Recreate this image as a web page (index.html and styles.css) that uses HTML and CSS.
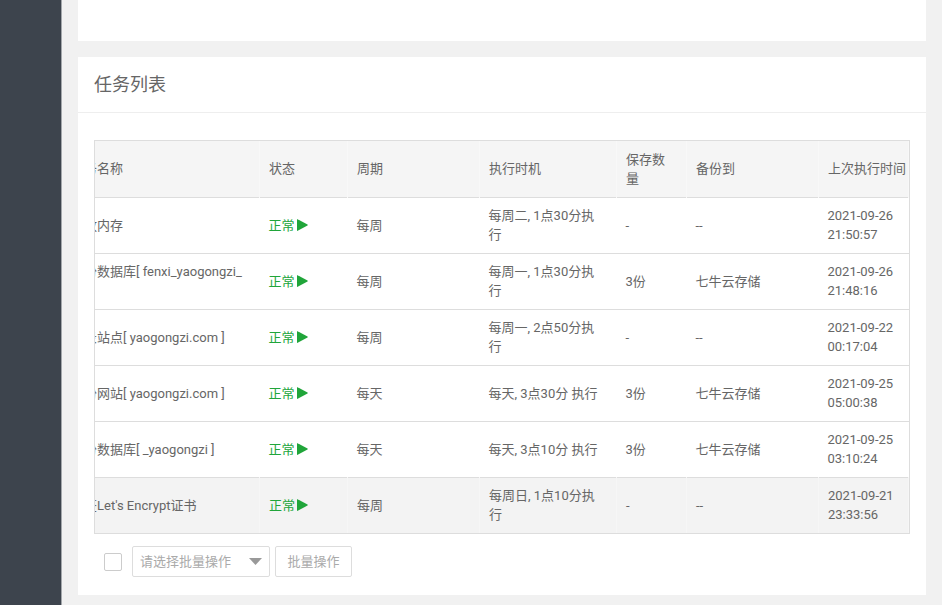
FILE: index.html
```html
<!DOCTYPE html>
<html lang="zh-CN">

<head>
    <meta charset="UTF-8">
    <meta name="viewport" content="width=device-width, initial-scale=1.0">
    <title>计划任务</title>
    <link rel="stylesheet" href="styles.css">
</head>

<body>
    <svg width="0" height="0" class="sprite" aria-hidden="true">
        <symbol id="play" viewBox="0 0 11 12">
            <path d="M0 0.6Q0 -0.1 0.7 0.2L10.5 5.5Q11 6 10.5 6.5L0.7 11.8Q0 12.1 0 11.4Z" fill="currentColor"/>
        </symbol>
    </svg>
    <div class="layout">
        <aside class="sidebar"></aside>
        <main class="main">
            <section class="card card-form"></section>

            <section class="card">
                <h1 class="card-title">任务列表</h1>
                <div class="card-body">
                    <div class="table-wrap">
                        <table class="task-table">
                            <colgroup>
                                <col>
                                <col class="col-status">
                                <col class="col-cycle">
                                <col class="col-time">
                                <col class="col-save">
                                <col class="col-target">
                                <col class="col-last">
                            </colgroup>
                            <thead>
                                <tr>
                                    <th>任务名称</th>
                                    <th>状态</th>
                                    <th>周期</th>
                                    <th>执行时机</th>
                                    <th>保存数量</th>
                                    <th>备份到</th>
                                    <th class="nowrap">上次执行时间</th>
                                </tr>
                            </thead>
                            <tbody>
                                <tr>
                                    <td>释放内存</td>
                                    <td><a class="status" href="#">正常<svg class="play"><use href="#play"/></svg></a></td>
                                    <td>每周</td>
                                    <td>每周二, 1点30分执行</td>
                                    <td>-</td>
                                    <td>--</td>
                                    <td>2021-09-26 21:50:57</td>
                                </tr>
                                <tr>
                                    <td>备份数据库[ fenxi_yaogongzi_<br>&nbsp;</td>
                                    <td><a class="status" href="#">正常<svg class="play"><use href="#play"/></svg></a></td>
                                    <td>每周</td>
                                    <td>每周一, 1点30分执行</td>
                                    <td>3份</td>
                                    <td>七牛云存储</td>
                                    <td>2021-09-26 21:48:16</td>
                                </tr>
                                <tr>
                                    <td>收录站点[ yaogongzi.com ]</td>
                                    <td><a class="status" href="#">正常<svg class="play"><use href="#play"/></svg></a></td>
                                    <td>每周</td>
                                    <td>每周一, 2点50分执行</td>
                                    <td>-</td>
                                    <td>--</td>
                                    <td>2021-09-22 00:17:04</td>
                                </tr>
                                <tr>
                                    <td>备份网站[ yaogongzi.com ]</td>
                                    <td><a class="status" href="#">正常<svg class="play"><use href="#play"/></svg></a></td>
                                    <td>每天</td>
                                    <td>每天, 3点30分 执行</td>
                                    <td>3份</td>
                                    <td>七牛云存储</td>
                                    <td>2021-09-25 05:00:38</td>
                                </tr>
                                <tr>
                                    <td>备份数据库[ _yaogongzi ]</td>
                                    <td><a class="status" href="#">正常<svg class="play"><use href="#play"/></svg></a></td>
                                    <td>每天</td>
                                    <td>每天, 3点10分 执行</td>
                                    <td>3份</td>
                                    <td>七牛云存储</td>
                                    <td>2021-09-25 03:10:24</td>
                                </tr>
                                <tr class="active">
                                    <td>续签Let's Encrypt证书</td>
                                    <td><a class="status" href="#">正常<svg class="play"><use href="#play"/></svg></a></td>
                                    <td>每周</td>
                                    <td>每周日, 1点10分执行</td>
                                    <td>-</td>
                                    <td>--</td>
                                    <td>2021-09-21 23:33:56</td>
                                </tr>
                            </tbody>
                        </table>
                    </div>

                    <div class="batch">
                        <input type="checkbox" class="check" aria-label="全选">
                        <div class="select-wrap">
                            <select class="select" aria-label="批量操作">
                                <option>请选择批量操作</option>
                            </select>
                            <svg class="caret" viewBox="0 0 13 7"><path d="M0 0H13L6.5 7Z" fill="#999"/></svg>
                        </div>
                        <button type="button" class="btn">批量操作</button>
                    </div>
                </div>
            </section>
        </main>
    </div>
</body>

</html>
```

FILE: styles.css
```css
* {
    box-sizing: border-box;
}

body {
    margin: 0;
    background: #f1f1f1;
    color: #666;
    font: 13px/19px Roboto, "Noto Sans CJK SC", sans-serif;
}

.sprite {
    position: absolute;
}

.layout {
    display: flex;
    min-height: 100vh;
}

.sidebar {
    flex: 0 0 62px;
    background: #3d444d;
    border-right: 1px solid #a3a7ab;
}

.main {
    flex: 1;
    min-width: 0;
    padding: 0 16px 10px;
}

.card {
    background: #fff;
}

.card-form {
    height: 41px;
    margin-bottom: 16px;
}

.card-title {
    margin: 0;
    padding: 14px 16px;
    border-bottom: 1px solid #eee;
    font-size: 18px;
    line-height: 27px;
    font-weight: 400;
}

.card-body {
    padding: 27px 16px 18px;
}

/* table is wider than its box, left edge scrolled out */
.table-wrap {
    overflow: hidden;
    border: 1px solid #ddd;
}

.task-table {
    width: calc(100% + 33px);
    margin-left: -33px;
    table-layout: fixed;
    border-collapse: collapse;
}

.col-status {
    width: 88px;
}

.col-cycle,
.col-target {
    width: 132px;
}

.col-time {
    width: 137px;
}

.col-save {
    width: 70px;
}

.col-last {
    width: 90px;
}

.task-table th,
.task-table td {
    height: 56px;
    padding: 8px 9px;
    text-align: left;
    vertical-align: middle;
    font-weight: 400;
}

.task-table th {
    background: #f5f5f5;
    border-right: 1px solid #f8f8f8;
}

.task-table td {
    border-top: 1px solid #ddd;
}

.task-table td:nth-child(4) {
    padding-right: 16px;
}

.task-table .active td {
    background: #f3f3f3;
    border-right: 1px solid #f6f6f6;
}

.task-table .nowrap {
    white-space: nowrap;
}

.status {
    display: flex;
    align-items: center;
    color: #20a53a;
    text-decoration: none;
}

.play {
    width: 11px;
    height: 12px;
    margin-left: 2px;
}

.batch {
    display: flex;
    align-items: center;
    margin: 12px 0 0 10px;
}

.check {
    appearance: none;
    width: 18px;
    height: 18px;
    margin: 0 10px 0 0;
    border: 1px solid #ccc;
    border-radius: 2px;
    background: #fff;
}

.select-wrap {
    position: relative;
    margin-right: 5px;
}

.select,
.btn {
    height: 31px;
    border: 1px solid #ddd;
    border-radius: 2px;
    background: #fff;
    color: #aaa;
    font: inherit;
}

.select {
    appearance: none;
    width: 138px;
    padding: 0 7px;
}

.caret {
    position: absolute;
    top: 12px;
    right: 8px;
    width: 13px;
    height: 7px;
    pointer-events: none;
}

.btn {
    width: 77px;
    padding: 0;
}
```
